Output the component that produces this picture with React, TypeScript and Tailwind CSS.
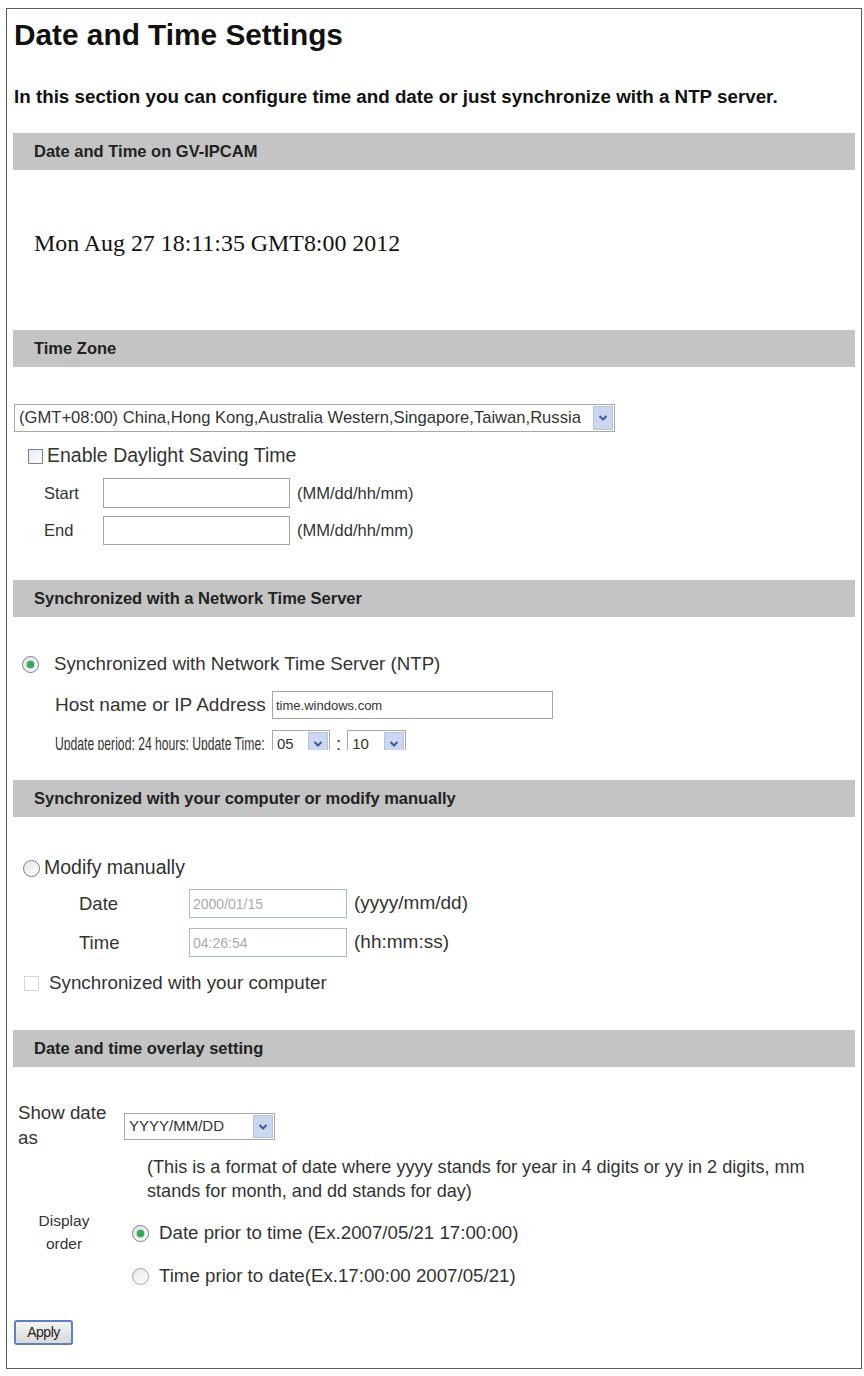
import type { ReactNode } from 'react';

// 섹션 제목 바
function SectionBar({ title }: { title: string }) {
  return (
    <div className="mx-[6px] h-[37px] bg-[#c4c4c4] flex items-center pl-[21px] text-[16.5px] font-bold text-[#222]">
      {title}
    </div>
  );
}

function Chevron() {
  return (
    <svg width="10" height="8" viewBox="0 0 10 8">
      <path d="M1.5 2 L5 5.5 L8.5 2" fill="none" stroke="#3f5a9c" strokeWidth="2" />
    </svg>
  );
}

// 드롭다운 모양 박스 (읽기 전용)
function FakeSelect({ value, className, textClass }: { value: string; className: string; textClass: string }) {
  return (
    <div className={`flex items-stretch bg-white border border-[#a7a7a7] ${className}`}>
      <div className={`flex-1 flex items-center pl-[4px] whitespace-nowrap overflow-hidden text-[#333] ${textClass}`}>
        {value}
      </div>
      <div className="w-[20px] my-[1px] mr-[1px] bg-[#cbd7ee] border border-[#b3c3e3] flex items-center justify-center">
        <Chevron />
      </div>
    </div>
  );
}

function Radio({ checked, dim }: { checked?: boolean; dim?: boolean }) {
  return (
    <div
      className={`w-[17px] h-[17px] shrink-0 rounded-full border flex items-center justify-center bg-gradient-to-br from-[#e6e6e6] to-white ${
        dim ? 'border-[#9aa4ad]' : 'border-[#6f7f8f]'
      }`}
    >
      {checked && <div className="w-[7px] h-[7px] rounded-full bg-[#34a853] shadow-[0_0_2px_#2c7a3b]" />}
    </div>
  );
}

function Checkbox({ disabled }: { disabled?: boolean }) {
  return (
    <div
      className={`w-[15px] h-[15px] shrink-0 border bg-white ${
        disabled ? 'border-[#d6d6d6]' : 'border-[#6f86a3] bg-gradient-to-br from-[#e8e8e8] to-white'
      }`}
    />
  );
}

function TextBox({ value, className, muted }: { value?: string; className: string; muted?: boolean }) {
  return (
    <input
      readOnly
      value={value ?? ''}
      className={`border outline-none px-[3px] font-['Liberation_Sans',Arial,sans-serif] ${
        muted ? 'border-[#a9bccb] text-[#aaa] text-[14px]' : 'border-[#a5a5a5] text-[#333] text-[13px]'
      } ${className}`}
    />
  );
}

function Row({ children, className }: { children: ReactNode; className: string }) {
  return <div className={`flex items-center ${className}`}>{children}</div>;
}

export default function App() {
  return (
    <div className="bg-white pt-[8px] font-['Liberation_Sans',Arial,sans-serif] text-[#333]">
      <div className="ml-[6px] w-[856px] h-[1361px] border border-[#5a5a5a]">
        {/* 제목 */}
        <div className="h-[52px] flex items-center pl-[7px] text-[29.8px] font-bold text-[#111]">
          Date and Time Settings
        </div>
        <div className="h-[72px] flex items-center pl-[7px] text-[18.8px] font-bold text-[#111]">
          In this section you can configure time and date or just synchronize with a NTP server.
        </div>

        {/* 현재 시각 */}
        <SectionBar title="Date and Time on GV-IPCAM" />
        <div className="h-[160px] pt-[59px] pl-[27px]">
          <div className="h-[30px] flex items-center font-['Liberation_Serif','Times_New_Roman',serif] text-[23.9px] text-[#111]">
            Mon Aug 27 18:11:35 GMT8:00 2012
          </div>
        </div>

        {/* 시간대 */}
        <SectionBar title="Time Zone" />
        <div className="h-[213px] pt-[37px] pl-[7px]">
          <FakeSelect
            value="(GMT+08:00) China,Hong Kong,Australia Western,Singapore,Taiwan,Russia"
            className="w-[601px] h-[28px]"
            textClass="text-[16.6px]"
          />
          <Row className="mt-[12px] h-[24px] pl-[14px] gap-[4px] text-[19.5px]">
            <Checkbox />
            <span>Enable Daylight Saving Time</span>
          </Row>
          <Row className="mt-[10px] h-[30px] text-[16.5px]">
            <span className="w-[89px] pl-[30px]">Start</span>
            <TextBox className="w-[187px] h-[30px]" />
            <span className="ml-[7px]">(MM/dd/hh/mm)</span>
          </Row>
          <Row className="mt-[8px] h-[29px] text-[16.5px]">
            <span className="w-[89px] pl-[30px]">End</span>
            <TextBox className="w-[187px] h-[29px]" />
            <span className="ml-[7px]">(MM/dd/hh/mm)</span>
          </Row>
        </div>

        {/* NTP 동기화 (아래쪽이 잘려 보이는 영역) */}
        <SectionBar title="Synchronized with a Network Time Server" />
        <div className="h-[133px] overflow-hidden pt-[35px] pl-[15px] text-[18.7px]">
          <Row className="h-[24px] gap-[15px]">
            <Radio checked />
            <span>Synchronized with Network Time Server (NTP)</span>
          </Row>
          <Row className="mt-[15px] h-[28px] pl-[33px]">
            <span className="w-[217px] text-[19px] whitespace-nowrap">Host name or IP Address</span>
            <TextBox value="time.windows.com" className="w-[281px] h-[28px]" />
          </Row>
          <Row className="mt-[11px] h-[28px] pl-[33px]">
            <span className="w-[217px] overflow-visible whitespace-nowrap">
              <span className="inline-block origin-left scale-x-[0.64] text-[19px]">Update period: 24 hours: Update Time:</span>
            </span>
            <FakeSelect value="05" className="w-[58px] h-[28px] shrink-0" textClass="text-[15px]" />
            <span className="mx-[6px]">:</span>
            <FakeSelect value="10" className="w-[59px] h-[28px] shrink-0" textClass="text-[15px]" />
          </Row>
        </div>
        <div className="h-[30px]" />

        {/* 수동 설정 */}
        <SectionBar title="Synchronized with your computer or modify manually" />
        <div className="h-[213px] pt-[39px] pl-[16px] text-[19px]">
          <Row className="h-[24px] gap-[4px]">
            <Radio />
            <span className="text-[19.5px]">Modify manually</span>
          </Row>
          <Row className="mt-[9px] h-[29px]">
            <span className="w-[166px] pl-[56px] text-[18.5px]">Date</span>
            <TextBox value="2000/01/15" muted className="w-[158px] h-[29px]" />
            <span className="ml-[7px]">(yyyy/mm/dd)</span>
          </Row>
          <Row className="mt-[10px] h-[29px]">
            <span className="w-[166px] pl-[56px] text-[18.5px]">Time</span>
            <TextBox value="04:26:54" muted className="w-[158px] h-[29px]" />
            <span className="ml-[7px]">(hh:mm:ss)</span>
          </Row>
          <Row className="mt-[14px] h-[24px] pl-[1px] gap-[10px] text-[18.8px]">
            <Checkbox disabled />
            <span>Synchronized with your computer</span>
          </Row>
        </div>

        {/* 오버레이 */}
        <SectionBar title="Date and time overlay setting" />
        <div className="pl-[11px] text-[18.7px]">
          <div className="flex mt-[33px]">
            <div className="w-[106px] leading-[25px]">
              <div>Show date</div>
              <div>as</div>
            </div>
            <FakeSelect value="YYYY/MM/DD" className="w-[151px] h-[27px] mt-[13px]" textClass="text-[15px]" />
          </div>
          <div className="ml-[129px] mt-[5px] leading-[24px] text-[18.1px]">
            <div>(This is a format of date where yyyy stands for year in 4 digits or yy in 2 digits, mm</div>
            <div>stands for month, and dd stands for day)</div>
          </div>
          <div className="flex mt-[6px]">
            <div className="w-[92px] text-center leading-[23px] text-[15.5px]">
              <div>Display</div>
              <div>order</div>
            </div>
            <div className="ml-[22px] pt-[12px]">
              <Row className="h-[24px] gap-[10px]">
                <Radio checked />
                <span>Date prior to time (Ex.2007/05/21 17:00:00)</span>
              </Row>
              <Row className="mt-[19px] h-[24px] gap-[10px]">
                <Radio dim />
                <span>Time prior to date(Ex.17:00:00 2007/05/21)</span>
              </Row>
            </div>
          </div>
          <button className="mt-[32px] -ml-[4px] w-[59px] h-[25px] rounded-[3px] border-2 border-[#5f82bd] bg-gradient-to-b from-[#f4f4f4] to-[#d9d9d9] text-[14px] text-[#222] tracking-[-0.5px]">
            Apply
          </button>
        </div>
      </div>
    </div>
  );
}
